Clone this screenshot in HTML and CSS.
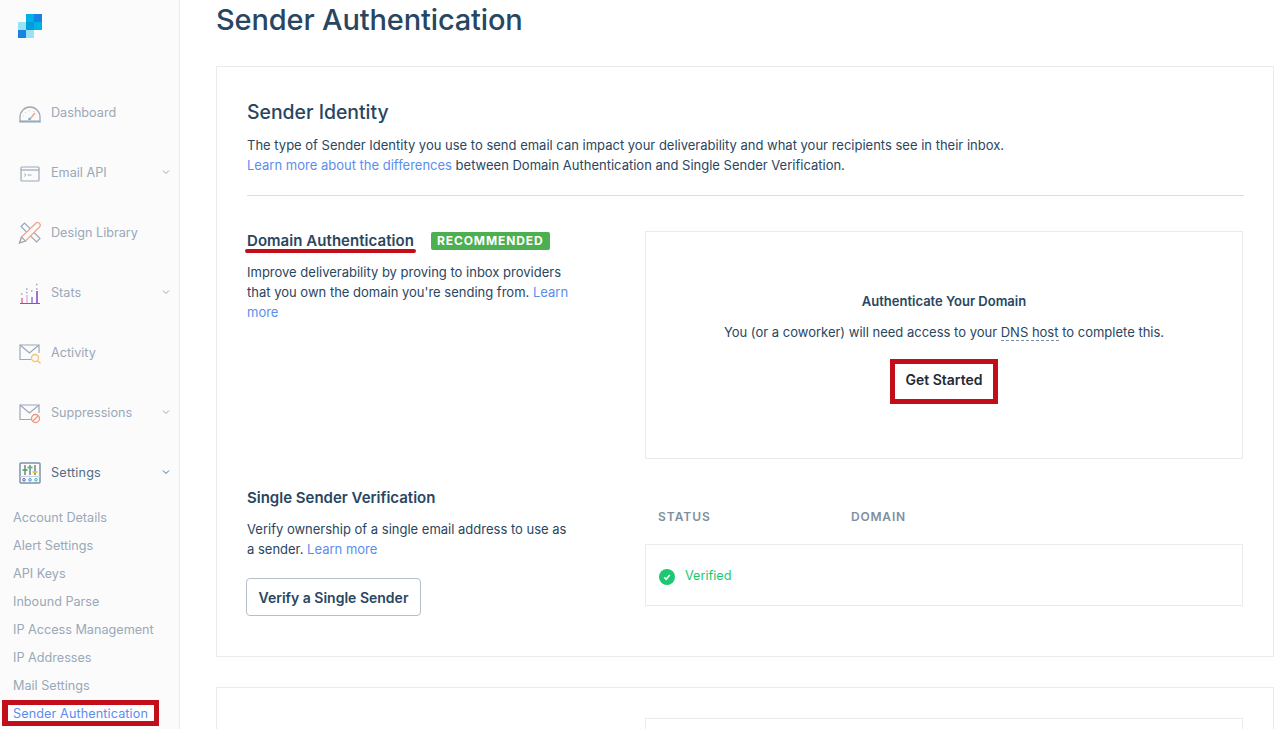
FILE: index.html
```html
<!DOCTYPE html>
<html lang="en">
<head>
<meta charset="utf-8">
<title>Sender Authentication</title>
<link rel="stylesheet" href="styles.css">
</head>
<body>
<div class="app">
  <aside class="sidebar">
    <svg class="logo" width="24" height="24" viewBox="0 0 24 24">
      <rect x="8" y="0" width="8" height="8" fill="#00b2e3"/>
      <rect x="16" y="0" width="8" height="8" fill="#1a82e2"/>
      <rect x="0" y="8" width="8" height="8" fill="#99e1f4"/>
      <rect x="8" y="8" width="8" height="8" fill="#009dd9"/>
      <rect x="16" y="8" width="8" height="8" fill="#00b2e3"/>
      <rect x="0" y="16" width="8" height="8" fill="#1a82e2"/>
      <rect x="8" y="16" width="8" height="8" fill="#99e1f4"/>
    </svg>
    <nav class="nav">
      <div class="nav-item">
        <svg class="nav-icon" width="24" height="24" viewBox="0 0 24 24" fill="none">
          <path d="M2 20.500V16a10 10 0 0 1 20 0v4.500z" stroke="#9aa8b8" stroke-width="1.300"/>
          <path d="M1.500 20.500h21" stroke="#9aa8b8" stroke-width="1.800"/>
          <path d="M12 18l5-6" stroke="#f2a68c" stroke-width="1.500"/>
          <circle cx="11.500" cy="18" r="1.300" fill="#6ea8e6"/>
          <path d="M5 15h1M7 11l1 1M11 9v1.500M15.500 10l-.5 1" stroke="#f5d28a" stroke-width="1"/>
        </svg>
        <span class="nav-label">Dashboard</span>
      </div>
      <div class="nav-item">
        <svg class="nav-icon" width="24" height="24" viewBox="0 0 24 24" fill="none">
          <rect x="3" y="6" width="18" height="14" rx="1" stroke="#9aa8b8" stroke-width="1.200"/>
          <path d="M3 9h18" stroke="#9aa8b8" stroke-width="1.200"/>
          <path d="M6 12.500l2 1.500-2 1.500" stroke="#8fd6a0" stroke-width="1"/>
          <path d="M9.500 14h4" stroke="#9aa8b8" stroke-width="1"/>
        </svg>
        <span class="nav-label">Email API</span>
        <svg class="chev" width="8" height="6" viewBox="0 0 8 6" fill="none"><path d="M1 1.500l3 3 3-3" stroke="#9aa8b8" stroke-width="1"/></svg>
      </div>
      <div class="nav-item">
        <svg class="nav-icon" width="24" height="24" viewBox="0 0 24 24" fill="none">
          <path d="M3 5.500L6.500 2 22 17.500 18.500 21z" stroke="#9aa8b8" stroke-width="1.200"/>
          <path d="M1.500 22l2-6L17.500 2.500a2 2 0 0 1 4 3.500L7.500 20z" fill="#fbfbfb" stroke="#f0a590" stroke-width="1.300"/>
          <path d="M1.500 22l2-6 4 4z" stroke="#9aa8b8" stroke-width="1.100"/>
        </svg>
        <span class="nav-label">Design Library</span>
      </div>
      <div class="nav-item">
        <svg class="nav-icon" width="24" height="24" viewBox="0 0 24 24" fill="none">
          <path d="M2 22.500h20" stroke="#6d6a9a" stroke-width="1"/>
          <rect x="3" y="17" width="2" height="5" fill="#f48fb1"/>
          <rect x="8" y="14" width="2" height="8" fill="#e3c6f0"/>
          <rect x="13" y="16" width="2" height="6" fill="#a89ae6"/>
          <rect x="18" y="10" width="2" height="12" fill="#a56ed6"/>
          <path d="M3 13h1.500M8 8h1.500M8 11.500h1.500M13 10h1.500M18 3.500h1.500M18 8h1.500" stroke="#9aa8b8" stroke-width="1.300"/>
        </svg>
        <span class="nav-label">Stats</span>
        <svg class="chev" width="8" height="6" viewBox="0 0 8 6" fill="none"><path d="M1 1.500l3 3 3-3" stroke="#9aa8b8" stroke-width="1"/></svg>
      </div>
      <div class="nav-item">
        <svg class="nav-icon" width="24" height="24" viewBox="0 0 24 24" fill="none">
          <path d="M13 18.500H2V4h19v8" stroke="#9aa8b8" stroke-width="1.200"/>
          <path d="M2 4l9.500 8L21 4" stroke="#9aa8b8" stroke-width="1.200"/>
          <circle cx="17" cy="17" r="3.500" stroke="#f7bf6f" stroke-width="1.300"/>
          <path d="M19.500 19.500l3 3" stroke="#f7bf6f" stroke-width="1.300"/>
        </svg>
        <span class="nav-label">Activity</span>
      </div>
      <div class="nav-item">
        <svg class="nav-icon" width="24" height="24" viewBox="0 0 24 24" fill="none">
          <path d="M13 18.500H2V4h19v8" stroke="#9aa8b8" stroke-width="1.200"/>
          <path d="M2 4l9.500 8L21 4" stroke="#9aa8b8" stroke-width="1.200"/>
          <circle cx="17.500" cy="17.500" r="4" stroke="#f0957a" stroke-width="1.300"/>
          <path d="M15 20l5-5" stroke="#f0957a" stroke-width="1.300"/>
        </svg>
        <span class="nav-label">Suppressions</span>
        <svg class="chev" width="8" height="6" viewBox="0 0 8 6" fill="none"><path d="M1 1.500l3 3 3-3" stroke="#9aa8b8" stroke-width="1"/></svg>
      </div>
      <div class="nav-item active">
        <svg class="nav-icon" width="24" height="24" viewBox="0 0 24 24" fill="none">
          <rect x="2" y="2" width="20" height="20" rx="1" stroke="#7d92a8" stroke-width="1.500"/>
          <path d="M2 15.500h20" stroke="#c5d0da" stroke-width="1"/>
          <path d="M7 4v10M12 4v10M17 4v10" stroke="#294661" stroke-width="1"/>
          <path d="M4.500 9h5" stroke="#4caf50" stroke-width="1.800"/>
          <path d="M9.500 6.500h5" stroke="#5cb85c" stroke-width="1.800"/>
          <path d="M14.500 11h5" stroke="#d6cf45" stroke-width="1.800"/>
          <circle cx="6" cy="18.800" r="1.300" stroke="#5a5fb5" stroke-width="1"/>
          <circle cx="12" cy="18.800" r="1.300" stroke="#3f8fd6" stroke-width="1"/>
          <circle cx="18" cy="18.800" r="1.300" stroke="#22b8d6" stroke-width="1"/>
        </svg>
        <span class="nav-label">Settings</span>
        <svg class="chev" width="8" height="6" viewBox="0 0 8 6" fill="none"><path d="M1 1.500l3 3 3-3" stroke="#3f6e96" stroke-width="1"/></svg>
      </div>
    </nav>
    <ul class="subnav">
      <li>Account Details</li>
      <li>Alert Settings</li>
      <li>API Keys</li>
      <li>Inbound Parse</li>
      <li>IP Access Management</li>
      <li>IP Addresses</li>
      <li>Mail Settings</li>
      <li class="current"><span class="current-box">Sender Authentication</span></li>
    </ul>
  </aside>
  <main class="main">
    <h1 class="page-title">Sender Authentication</h1>
    <section class="card">
      <h2 class="card-title">Sender Identity</h2>
      <p class="intro">The type of Sender Identity you use to send email can impact your deliverability and what your recipients see in their inbox.<br><a class="link">Learn more about the differences</a> between Domain Authentication and Single Sender Verification.</p>
      <hr class="rule">
      <div class="row row-domain">
        <div class="col-left">
          <div class="head-line">
            <h3 class="sub-title underlined">Domain Authentication</h3>
            <span class="badge">RECOMMENDED</span>
          </div>
          <p class="desc">Improve deliverability by proving to inbox providers that you own the domain you're sending from. <a class="link">Learn more</a></p>
        </div>
        <div class="panel">
          <h4 class="panel-title">Authenticate Your Domain</h4>
          <p class="panel-text">You (or a coworker) will need access to your <span class="dotted">DNS host</span> to complete this.</p>
          <button class="btn-highlight">Get Started</button>
        </div>
      </div>
      <div class="row row-single">
        <div class="col-left">
          <h3 class="sub-title">Single Sender Verification</h3>
          <p class="desc desc-single">Verify ownership of a single email address to use as a sender. <a class="link">Learn more</a></p>
          <button class="btn">Verify a Single Sender</button>
        </div>
        <div class="col-right">
          <div class="table-head"><span class="th th-status">STATUS</span><span class="th th-domain">DOMAIN</span></div>
          <div class="status-box">
            <svg class="status-icon" width="16" height="16" viewBox="0 0 16 16"><circle cx="8" cy="8" r="8" fill="#1ec773"/><path d="M5.200 8.300l2 2 3.500-4.200" fill="none" stroke="#fff" stroke-width="1.500"/></svg>
            <span class="verified">Verified</span>
          </div>
        </div>
      </div>
    </section>
    <section class="card card-next">
      <div class="next-panel"></div>
    </section>
  </main>
</div>
</body>
</html>
```
FILE: styles.css
```css
* { box-sizing: border-box; }
html, body { margin: 0; padding: 0; height: 100%; overflow: hidden; background: #fff; }
body { font-family: Inter, "Liberation Sans", sans-serif; font-size: 13px; color: #294661; }
.app { display: flex; height: 729px; overflow: hidden; }
.sidebar { flex: 0 0 180px; background: #fbfbfc; border-right: 1px solid #e9ecef; padding-top: 14px; font-size: 12.65px; }
.logo { display: block; margin-left: 18px; }
.nav { margin-top: 45px; display: flex; flex-direction: column; }
.nav-item { height: 60px; display: flex; align-items: center; padding-left: 18px; padding-right: 9px; color: #9aa8b8; position: relative; }
.nav-item.active { color: #546b81; letter-spacing: 0.2px; }
.nav-icon { flex: none; }
.nav-label { margin-left: 9px; flex: 1; line-height: 20px; }
.chev { flex: none; margin-top: -3px; }
.subnav { list-style: none; margin: 1px 0 0; padding: 0; }
.subnav li { height: 28px; line-height: 28px; padding-left: 13px; color: #9aa8b8; white-space: nowrap; }
.subnav li.current { color: #5b8def; padding-left: 2px; height: 26px; line-height: 20px; letter-spacing: 0.1px; }
.current-box { display: inline-block; border: 5px solid #c20e1a; border-width: 5px 5px 5px 6px; padding: 0 5px; height: 26px; line-height: 18px; width: 157px; background: #fff; }
.main { flex: 1; min-width: 0; padding-left: 36px; padding-right: 7px; }
.page-title { margin: 0; font-size: 29px; font-weight: 500; line-height: 40px; color: #294661; letter-spacing: -0.15px; }
.card { margin-top: 26px; border: 1px solid #e9ecef; padding: 30px 30px 0; height: 591px; }
.card-title { margin: 0; font-size: 19.4px; font-weight: 500; line-height: 30px; color: #294661; }
.intro { margin: 8px 0 0; line-height: 20px; color: #294661; }
.link { color: #5b8def; }
.rule { margin: 20px -1px 0 0; border: 0; border-top: 1px solid #d8dee3; }
.row { display: flex; justify-content: space-between; }
.row-domain { margin-top: 35px; height: 228px; }
.row-single { margin-top: 29px; }
.col-left { width: 325px; }
.col-right { width: 598px; }
.head-line { display: flex; align-items: center; height: 20px; }
.sub-title { margin: 0; font-size: 15px; font-weight: 600; line-height: 20px; color: #294661; white-space: nowrap; }
.underlined { position: relative; letter-spacing: 0.05px; }
.underlined::after { content: ""; position: absolute; left: -2px; right: -2px; top: 18px; height: 4px; border-radius: 2px; background: #c20e1a; }
.badge { margin-left: 17px; height: 18px; line-height: 18px; padding: 0 6px; border-radius: 2px; background: #4caf50; color: #fff; font-size: 12px; font-weight: 700; letter-spacing: 0.9px; white-space: nowrap; }
.desc { margin: 11px 0 0; line-height: 20px; color: #294661; }
.panel { width: 598px; height: 228px; border: 1px solid #e9ecef; display: flex; flex-direction: column; align-items: center; padding-top: 59px; }
.panel-title { margin: 0; font-size: 13px; font-weight: 600; line-height: 20px; color: #294661; }
.panel-text { margin: 11px 0 0; line-height: 20px; color: #294661; }
.dotted { border-bottom: 1px dashed #7f8fa0; }
.btn-highlight { margin-top: 17px; width: 108px; height: 45px; background: #fff; border: 5px solid #c20e1a; font: 600 14px Inter, "Liberation Sans", sans-serif; color: #1f2a37; padding: 0 0 5px; }
.btn { margin-top: 19px; margin-left: -1px; width: 175px; height: 38px; background: #fff; border: 1px solid #b4bec8; border-radius: 4px; font: 600 14px Inter, "Liberation Sans", sans-serif; color: #294661; padding: 0; }
.table-head { display: flex; padding-left: 13px; height: 20px; align-items: center; margin-top: 18px; }
.th { font-size: 12px; font-weight: 600; color: #7f8fa0; }
.th-status { width: 193px; letter-spacing: 1px; }
.th-domain { letter-spacing: 0.8px; }
.status-box { margin-top: 18px; height: 62px; border: 1px solid #e9ecef; display: flex; align-items: center; padding-left: 13px; gap: 10px; }
.status-icon { margin-top: 4px; }
.verified { color: #1ec773; font-size: 12.7px; }
.card-next { margin-top: 30px; padding: 30px 30px 0; height: 100px; }
.next-panel { width: 598px; height: 60px; border: 1px solid #e9ecef; margin-left: 398px; }
```
